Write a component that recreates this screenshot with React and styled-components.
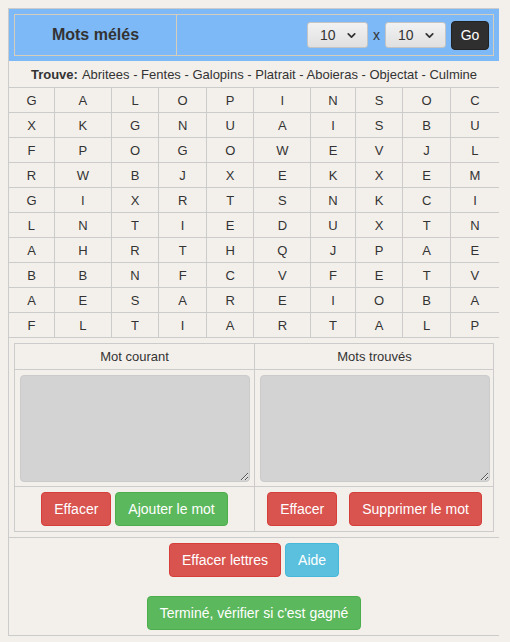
import styled, { createGlobalStyle } from 'styled-components';
import { ChevronDown } from 'lucide-react';

const GlobalStyle = createGlobalStyle`
  body {
    margin: 8px;
    background: #f3f0eb;
    font-family: 'Liberation Sans', Arial, sans-serif;
    color: #333;
  }
`;

const Page = styled.div`
  width: 491px;
  box-sizing: border-box;
  border-top: 1px solid #ccc;
  border-left: 1px solid #ccc;
  border-bottom: 1px solid #ccc;
`;

const Header = styled.div`
  background: #7db9f6;
  padding: 5px;
`;

const HeaderTable = styled.div`
  display: flex;
  height: 42px;
  box-sizing: border-box;
  border: 1px solid #d6cdbd;
`;

const TitleCell = styled.div`
  width: 161px;
  border-right: 1px solid #d6cdbd;
  display: flex;
  align-items: center;
  justify-content: center;
  font-size: 16px;
  font-weight: bold;
  color: #333;
`;

const Controls = styled.div`
  flex: 1;
  display: flex;
  align-items: center;
  justify-content: flex-end;
  padding-right: 4px;
  gap: 5px;
`;

const SelectWrap = styled.div`
  position: relative;
  width: 61px;
  height: 26px;
`;

const Select = styled.select`
  appearance: none;
  width: 100%;
  height: 100%;
  box-sizing: border-box;
  border: 1px solid #c4c4c4;
  border-radius: 3px;
  background: linear-gradient(#f2f2f2, #e0e0e0);
  font-family: inherit;
  font-size: 14px;
  color: #333;
  padding: 0 0 0 12px;
`;

const Chevron = styled(ChevronDown)`
  position: absolute;
  right: 10px;
  top: 7px;
  pointer-events: none;
`;

const Times = styled.span`
  font-size: 14px;
  color: #333;
`;

const GoButton = styled.button`
  height: 29px;
  width: 38px;
  padding: 0;
  border: 1px solid #222;
  border-radius: 4px;
  background: #2f2f2f;
  color: #fff;
  font-family: inherit;
  font-size: 14px;
`;

const Words = styled.div`
  height: 26px;
  display: flex;
  align-items: center;
  justify-content: center;
  font-size: 13px;
  color: #333;
  b {
    margin-right: 4px;
  }
`;

const Grid = styled.table`
  width: 100%;
  border-collapse: collapse;
  font-size: 13px;
`;

const Cell = styled.td`
  border-top: 1px solid #ccc;
  border-left: ${(p) => (p.$first ? 'none' : '1px solid #ccc')};
  height: 24px;
  padding: 0;
  text-align: center;
  color: #333;
`;

const Lower = styled.div`
  border-top: 1px solid #ccc;
  padding: 5px;
`;

const Panels = styled.div`
  display: grid;
  grid-template-columns: 1fr 1fr;
  border: 1px solid #ccc;
`;

const Panel = styled.div`
  display: flex;
  flex-direction: column;
  border-left: ${(p) => (p.$right ? '1px solid #ccc' : 'none')};
`;

const PanelTitle = styled.div`
  height: 25px;
  display: flex;
  align-items: center;
  justify-content: center;
  font-size: 13px;
  color: #333;
  border-bottom: 1px solid #ccc;
`;

const PanelBody = styled.div`
  padding: 5px 4px 4px 5px;
  border-bottom: 1px solid #ccc;
`;

const Area = styled.textarea`
  display: block;
  width: 230px;
  height: 107px;
  box-sizing: border-box;
  margin: 0;
  background: #d3d3d3;
  border: 1px solid #cbcbcb;
  border-radius: 4px;
`;

const ButtonRow = styled.div`
  display: flex;
  justify-content: center;
  gap: ${(p) => p.$gap || 4}px;
  padding: ${(p) => p.$pad || '5px 0'};
`;

const colors = {
  danger: ['#d9534f', '#d43f3a'],
  success: ['#5cb85c', '#4cae4c'],
  info: ['#5bc0de', '#46b8da'],
};

const Btn = styled.button`
  height: 34px;
  padding: 0 12px;
  border-radius: 4px;
  font-family: inherit;
  font-size: 14px;
  color: #fff;
  background: ${(p) => colors[p.$kind][0]};
  border: 1px solid ${(p) => colors[p.$kind][1]};
`;

const Footer = styled.div`
  border-top: 1px solid #ccc;
  display: flex;
  flex-direction: column;
  gap: 19px;
  padding: 5px 0 5px;
`;

const rows = [
  'GALOPINSOC',
  'XKGNUAISBU',
  'FPOGOWEVJL',
  'RWBJXEKXEM',
  'GIXRTSNKCI',
  'LNTIEDUXTN',
  'AHRTHQJPAE',
  'BBNFCVFETV',
  'AESAREIOBA',
  'FLTIARTALP',
];

function Picker() {
  return (
    <SelectWrap>
      <Select defaultValue="10">
        <option value="10">10</option>
      </Select>
      <Chevron size={13} strokeWidth={3.2} color="#333" />
    </SelectWrap>
  );
}

export default function App() {
  return (
    <>
      <GlobalStyle />
      <Page>
        <Header>
          <HeaderTable>
            <TitleCell>Mots mélés</TitleCell>
            <Controls>
              <Picker />
              <Times>x</Times>
              <Picker />
              <GoButton>Go</GoButton>
            </Controls>
          </HeaderTable>
        </Header>
        <Words>
          <b>Trouve:</b> Abritees - Fentes - Galopins - Platrait - Aboieras - Objectat - Culmine
        </Words>
        <Grid>
          <tbody>
            {rows.map((r, i) => (
              <tr key={i}>
                {r.split('').map((c, j) => (
                  <Cell key={j} $first={j === 0}>
                    {c}
                  </Cell>
                ))}
              </tr>
            ))}
          </tbody>
        </Grid>
        <Lower>
          <Panels>
            <Panel>
              <PanelTitle>Mot courant</PanelTitle>
              <PanelBody>
                <Area />
              </PanelBody>
              <ButtonRow>
                <Btn $kind="danger">Effacer</Btn>
                <Btn $kind="success">Ajouter le mot</Btn>
              </ButtonRow>
            </Panel>
            <Panel $right>
              <PanelTitle>Mots trouvés</PanelTitle>
              <PanelBody>
                <Area />
              </PanelBody>
              <ButtonRow $gap={12}>
                <Btn $kind="danger">Effacer</Btn>
                <Btn $kind="danger">Supprimer le mot</Btn>
              </ButtonRow>
            </Panel>
          </Panels>
        </Lower>
        <Footer>
          <ButtonRow $pad="0">
            <Btn $kind="danger">Effacer lettres</Btn>
            <Btn $kind="info">Aide</Btn>
          </ButtonRow>
          <ButtonRow $pad="0">
            <Btn $kind="success">Terminé, vérifier si c'est gagné</Btn>
          </ButtonRow>
        </Footer>
      </Page>
    </>
  );
}
